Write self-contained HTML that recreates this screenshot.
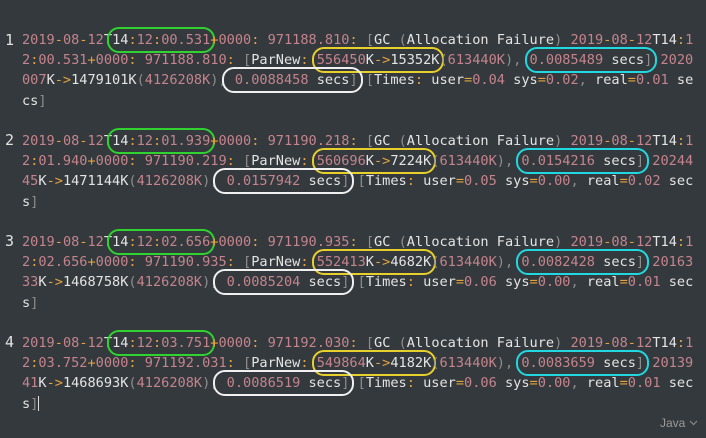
<!DOCTYPE html>
<html><head><meta charset="utf-8"><style>
html,body{margin:0;padding:0;background:#33393d;width:706px;height:438px;overflow:hidden}
pre{position:absolute;left:22px;top:30px;margin:0;font-family:"DejaVu Sans Mono","Liberation Mono",monospace;font-size:13.6px;line-height:20.2px;color:#c5848d;white-space:pre}
.ln{position:absolute;left:5px;font-family:"DejaVu Sans Mono",monospace;font-size:15px;color:#e2e2e2}
.o{color:#e6a23c}.w{color:#e4e4e4}.g{color:#8e8e8e}
.cg,.cy,.cc,.cw{border:2px solid;border-radius:12px;padding:3px 3px;margin:0 -5px}
.cg{border-color:#2fd22f}.cy{border-color:#e8d02c}.cc{border-color:#22d8e0}.cw{border-color:#f0f0f0}
.java{position:absolute;left:660px;top:416px;font-family:"Liberation Sans",sans-serif;font-size:12px;color:#9a9a9a}
.cur{display:inline-block;width:1px;height:15px;background:#ddd;vertical-align:-3px}
</style></head><body>
<div class="ln" style="top:31px">1</div>
<div class="ln" style="top:131px">2</div>
<div class="ln" style="top:232px">3</div>
<div class="ln" style="top:333px">4</div>
<pre>2019<span class="o">-</span>08<span class="o">-</span>12<span class="w">T</span><span class="cg"><span class="w">14</span><span class="o">:</span>12<span class="o">:</span>00.531</span><span class="o">+</span>0000<span class="o">:</span> 971188.810<span class="o">:</span> <span class="g">[</span><span class="w">GC</span> <span class="g">(</span><span class="w">Allocation Failure</span><span class="g">)</span> 2019<span class="o">-</span>08<span class="o">-</span>12<span class="w">T14</span><span class="o">:</span>1
2<span class="o">:</span>00.531<span class="o">+</span>0000<span class="o">:</span> 971188.810<span class="o">:</span> <span class="g">[</span><span class="w">ParNew</span><span class="o">:</span> <span class="cy">556450<span class="w">K</span><span class="o">-&gt;</span><span class="w">15352K</span></span><span class="g">(</span>613440K<span class="g">),</span> <span class="cc">0.0085489 <span class="w">secs</span><span class="g">]</span></span> 2020
007<span class="w">K</span><span class="o">-&gt;</span><span class="w">1479101K</span><span class="g">(</span>4126208K<span class="g">),</span><span class="cw"> 0.0088458 <span class="w">secs</span><span class="g">]</span></span> <span class="g">[</span><span class="w">Times</span><span class="o">:</span> <span class="w">user</span><span class="o">=</span>0.04 <span class="w">sys</span><span class="o">=</span>0.02<span class="g">,</span> <span class="w">real</span><span class="o">=</span>0.01 <span class="w">se</span>
<span class="w">cs</span><span class="g">]</span>

2019<span class="o">-</span>08<span class="o">-</span>12<span class="w">T</span><span class="cg"><span class="w">14</span><span class="o">:</span>12<span class="o">:</span>01.939</span><span class="o">+</span>0000<span class="o">:</span> 971190.218<span class="o">:</span> <span class="g">[</span><span class="w">GC</span> <span class="g">(</span><span class="w">Allocation Failure</span><span class="g">)</span> 2019<span class="o">-</span>08<span class="o">-</span>12<span class="w">T14</span><span class="o">:</span>1
2<span class="o">:</span>01.940<span class="o">+</span>0000<span class="o">:</span> 971190.219<span class="o">:</span> <span class="g">[</span><span class="w">ParNew</span><span class="o">:</span> <span class="cy">560696<span class="w">K</span><span class="o">-&gt;</span><span class="w">7224K</span></span><span class="g">(</span>613440K<span class="g">),</span> <span class="cc">0.0154216 <span class="w">secs</span><span class="g">]</span></span> 20244
45<span class="w">K</span><span class="o">-&gt;</span><span class="w">1471144K</span><span class="g">(</span>4126208K<span class="g">),</span><span class="cw"> 0.0157942 <span class="w">secs</span><span class="g">]</span></span> <span class="g">[</span><span class="w">Times</span><span class="o">:</span> <span class="w">user</span><span class="o">=</span>0.05 <span class="w">sys</span><span class="o">=</span>0.00<span class="g">,</span> <span class="w">real</span><span class="o">=</span>0.02 <span class="w">sec</span>
<span class="w">s</span><span class="g">]</span>

2019<span class="o">-</span>08<span class="o">-</span>12<span class="w">T</span><span class="cg"><span class="w">14</span><span class="o">:</span>12<span class="o">:</span>02.656</span><span class="o">+</span>0000<span class="o">:</span> 971190.935<span class="o">:</span> <span class="g">[</span><span class="w">GC</span> <span class="g">(</span><span class="w">Allocation Failure</span><span class="g">)</span> 2019<span class="o">-</span>08<span class="o">-</span>12<span class="w">T14</span><span class="o">:</span>1
2<span class="o">:</span>02.656<span class="o">+</span>0000<span class="o">:</span> 971190.935<span class="o">:</span> <span class="g">[</span><span class="w">ParNew</span><span class="o">:</span> <span class="cy">552413<span class="w">K</span><span class="o">-&gt;</span><span class="w">4682K</span></span><span class="g">(</span>613440K<span class="g">),</span> <span class="cc">0.0082428 <span class="w">secs</span><span class="g">]</span></span> 20163
33<span class="w">K</span><span class="o">-&gt;</span><span class="w">1468758K</span><span class="g">(</span>4126208K<span class="g">),</span><span class="cw"> 0.0085204 <span class="w">secs</span><span class="g">]</span></span> <span class="g">[</span><span class="w">Times</span><span class="o">:</span> <span class="w">user</span><span class="o">=</span>0.06 <span class="w">sys</span><span class="o">=</span>0.00<span class="g">,</span> <span class="w">real</span><span class="o">=</span>0.01 <span class="w">sec</span>
<span class="w">s</span><span class="g">]</span>

2019<span class="o">-</span>08<span class="o">-</span>12<span class="w">T</span><span class="cg"><span class="w">14</span><span class="o">:</span>12<span class="o">:</span>03.751</span><span class="o">+</span>0000<span class="o">:</span> 971192.030<span class="o">:</span> <span class="g">[</span><span class="w">GC</span> <span class="g">(</span><span class="w">Allocation Failure</span><span class="g">)</span> 2019<span class="o">-</span>08<span class="o">-</span>12<span class="w">T14</span><span class="o">:</span>1
2<span class="o">:</span>03.752<span class="o">+</span>0000<span class="o">:</span> 971192.031<span class="o">:</span> <span class="g">[</span><span class="w">ParNew</span><span class="o">:</span> <span class="cy">549864<span class="w">K</span><span class="o">-&gt;</span><span class="w">4182K</span></span><span class="g">(</span>613440K<span class="g">),</span> <span class="cc">0.0083659 <span class="w">secs</span><span class="g">]</span></span> 20139
41<span class="w">K</span><span class="o">-&gt;</span><span class="w">1468693K</span><span class="g">(</span>4126208K<span class="g">),</span><span class="cw"> 0.0086519 <span class="w">secs</span><span class="g">]</span></span> <span class="g">[</span><span class="w">Times</span><span class="o">:</span> <span class="w">user</span><span class="o">=</span>0.06 <span class="w">sys</span><span class="o">=</span>0.00<span class="g">,</span> <span class="w">real</span><span class="o">=</span>0.01 <span class="w">sec</span>
<span class="w">s</span><span class="g">]</span><span class="cur"></span></pre>
<div class="java">Java <svg width="9" height="6" viewBox="0 0 9 6" style="vertical-align:1px"><path d="M1 1 L4.5 4.5 L8 1" fill="none" stroke="#8a8a8a" stroke-width="1.2"/></svg></div>
</body></html>
